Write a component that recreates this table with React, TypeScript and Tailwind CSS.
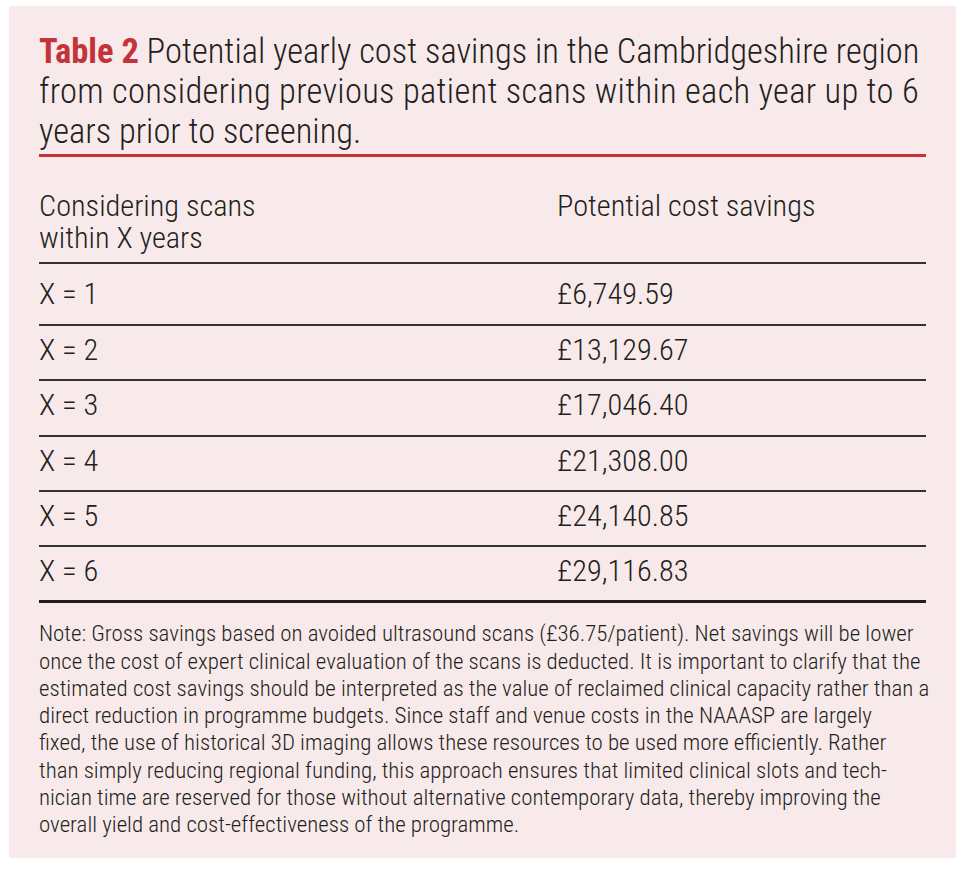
import React from "react";

const rows: [string, string][] = [
  ["X = 1", "£6,749.59"],
  ["X = 2", "£13,129.67"],
  ["X = 3", "£17,046.40"],
  ["X = 4", "£21,308.00"],
  ["X = 5", "£24,140.85"],
  ["X = 6", "£29,116.83"],
];

const noteLines = [
  "Note: Gross savings based on avoided ultrasound scans (£36.75/patient). Net savings will be lower",
  "once the cost of expert clinical evaluation of the scans is deducted. It is important to clarify that the",
  "estimated cost savings should be interpreted as the value of reclaimed clinical capacity rather than a",
  "direct reduction in programme budgets. Since staff and venue costs in the NAAASP are largely",
  "fixed, the use of historical 3D imaging allows these resources to be used more efficiently. Rather",
  "than simply reducing regional funding, this approach ensures that limited clinical slots and tech-",
  "nician time are reserved for those without alternative contemporary data, thereby improving the",
  "overall yield and cost-effectiveness of the programme.",
];

export default function App() {
  return (
    <div className="w-[974px] h-[872px] bg-white pt-[6px] pl-[9px]">
      <div
        className="w-[947px] h-[852px] bg-[#f8eaeb] pt-[25px] px-[30px] text-[#231f20] font-[350]"
        style={{ fontFamily: "'Roboto Condensed', 'Liberation Sans', sans-serif" }}
      >
        <h1 className="text-[34.5px] leading-[40px] font-[350] whitespace-nowrap">
          <span className="font-bold text-[#c2343a]">Table 2</span> Potential yearly cost savings in the Cambridgeshire region
          <br />
          <span className="tracking-[0.3px]">from considering previous patient scans within each year up to 6</span>
          <br />
          years prior to screening.
        </h1>
        <div className="mt-[3px] h-[3px] bg-[#c2343a]" />

        <div className="text-[30.3px] leading-[32px]">
          <div className="flex pt-[33px] pb-[8px] border-b-2 border-[#333]">
            <div className="w-[518px]">
              Considering scans
              <br />
              within X years
            </div>
            <div>Potential cost savings</div>
          </div>
          {rows.map(([x, v], i) => (
            <div
              key={x}
              className={
                "flex " +
                (i === 0 ? "pt-[14px] pb-[14px] " : "pt-[8px] pb-[13.3px] ") +
                (i === rows.length - 1 ? "border-b-[3px] border-[#231f20]" : "border-b-2 border-[#333]")
              }
            >
              <div className="w-[518px]">{x}</div>
              <div>{v}</div>
            </div>
          ))}
        </div>

        <div className="mt-[17px] text-[22.9px] leading-[27.2px]">
          {noteLines.map((l) => (
            <div key={l} className="whitespace-nowrap">
              {l}
            </div>
          ))}
        </div>
      </div>
    </div>
  );
}
